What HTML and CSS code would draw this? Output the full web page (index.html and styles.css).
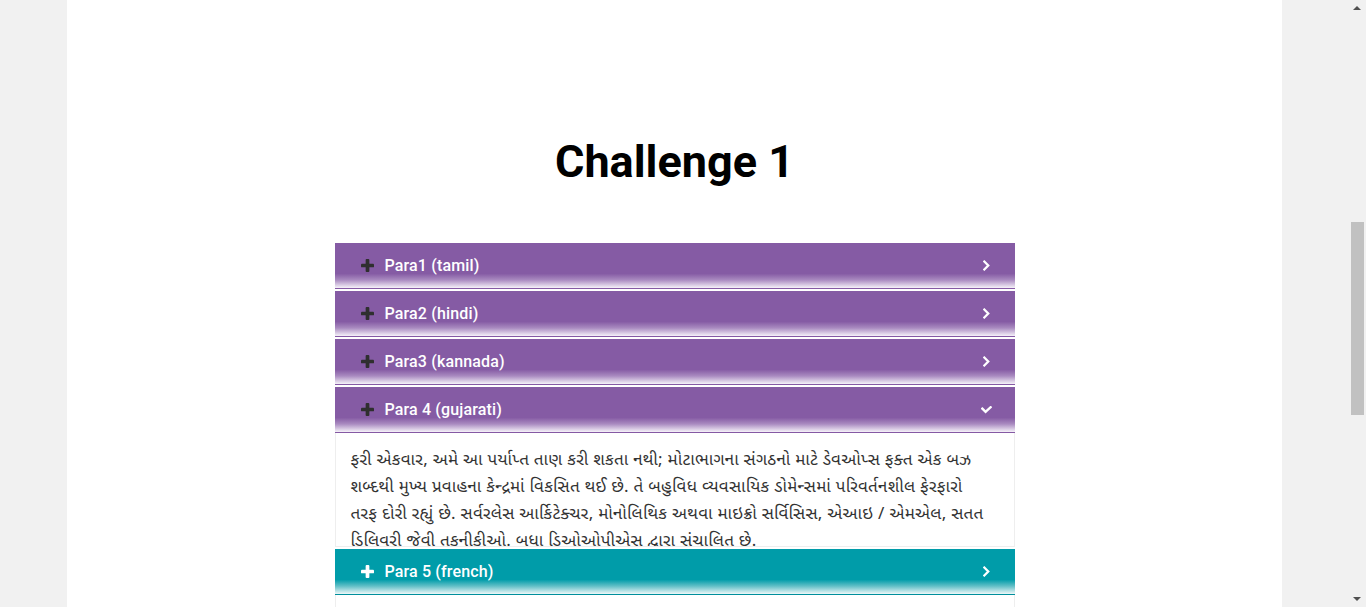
FILE: index.html
```html
<!DOCTYPE html>
<html lang="en">
<head>
<meta charset="utf-8">
<title>Challenge 1</title>
<link rel="stylesheet" href="styles.css">
</head>
<body>
<div class="page">
  <h1 class="title">Challenge 1</h1>
  <div class="accordion">
    <div class="item">
      <div class="head">
        <svg class="plus" viewBox="0 0 14 14"><rect x="5" y="0" width="4" height="14" rx="1"/><rect x="0" y="5" width="14" height="4" rx="1"/></svg>
        <span class="label">Para1 (tamil)</span>
        <svg class="chev" viewBox="0 0 8 12"><path d="M1.5 1.5 L6 6 L1.5 10.5" /></svg>
      </div>
    </div>
    <div class="item">
      <div class="head">
        <svg class="plus" viewBox="0 0 14 14"><rect x="5" y="0" width="4" height="14" rx="1"/><rect x="0" y="5" width="14" height="4" rx="1"/></svg>
        <span class="label">Para2 (hindi)</span>
        <svg class="chev" viewBox="0 0 8 12"><path d="M1.5 1.5 L6 6 L1.5 10.5" /></svg>
      </div>
    </div>
    <div class="item">
      <div class="head">
        <svg class="plus" viewBox="0 0 14 14"><rect x="5" y="0" width="4" height="14" rx="1"/><rect x="0" y="5" width="14" height="4" rx="1"/></svg>
        <span class="label">Para3 (kannada)</span>
        <svg class="chev" viewBox="0 0 8 12"><path d="M1.5 1.5 L6 6 L1.5 10.5" /></svg>
      </div>
    </div>
    <div class="item open">
      <div class="head">
        <svg class="plus" viewBox="0 0 14 14"><rect x="5" y="0" width="4" height="14" rx="1"/><rect x="0" y="5" width="14" height="4" rx="1"/></svg>
        <span class="label">Para 4 (gujarati)</span>
        <svg class="chev-down" viewBox="0 0 12 8"><path d="M1.5 2.5 L5 6 L10.5 1" /></svg>
      </div>
      <div class="body">
        <p class="gu">ફરી એકવાર, અમે આ પર્યાપ્ત તાણ કરી શકતા નથી; મોટાભાગના સંગઠનો માટે ડેવઓપ્સ ફક્ત એક બઝ શબ્દથી મુખ્ય પ્રવાહના કેન્દ્રમાં વિકસિત થઈ છે. તે બહુવિધ વ્યવસાયિક ડોમેન્સમાં પરિવર્તનશીલ ફેરફારો તરફ દોરી રહ્યું છે. સર્વરલેસ આર્કિટેક્ચર, મોનોલિથિક અથવા માઇક્રો સર્વિસિસ, એઆઇ / એમએલ, સતત ડિલિવરી જેવી તકનીકીઓ. બધા ડિઓઓપીએસ દ્વારા સંચાલિત છે.</p>
      </div>
    </div>
    <div class="item active">
      <div class="head">
        <svg class="plus" viewBox="0 0 14 14"><rect x="5" y="0" width="4" height="14" rx="1"/><rect x="0" y="5" width="14" height="4" rx="1"/></svg>
        <span class="label">Para 5 (french)</span>
        <svg class="chev" viewBox="0 0 8 12"><path d="M1.5 1.5 L6 6 L1.5 10.5" /></svg>
      </div>
      <div class="body">
        <p>Encore une fois, nous ne saurions trop insister sur ce point ; pour la plupart des organisations, DevOps est passé d'un simple mot à la mode au cœur du courant dominant. Il entraîne des changements transformateurs dans plusieurs domaines d'activité.</p>
      </div>
    </div>
  </div>
</div>
<div class="scrollbar" aria-hidden="true">
  <span class="arrow up"></span>
  <span class="thumb"></span>
  <span class="arrow down"></span>
</div>
</body>
</html>
```

FILE: styles.css
```css
html, body {
  margin: 0;
  padding: 0;
}
body {
  background: #f1f1f1;
  font-family: Roboto, "Liberation Sans", sans-serif;
  padding-right: 17px;
}
.page {
  width: 1215px;
  margin: 0 auto;
  background: #fff;
  padding: 133px 0 1200px;
  box-sizing: border-box;
}
.title {
  margin: 0 0 53px;
  text-align: center;
  font-size: 45px;
  font-weight: 700;
  color: #000;
  line-height: 57px;
}
.accordion {
  width: 680px;
  margin: 0 auto;
}
.item {
  margin-bottom: 2px;
}
.head {
  height: 45px;
  display: flex;
  align-items: center;
  padding: 0 25px 0 26px;
  border-bottom: 1px solid #8559a4;
  background: linear-gradient(to bottom, #855ba4 0, #855ba4 68%, #a98ac0 82%, #f6f2f9 100%);
  color: #fff;
  box-sizing: content-box;
}
.item.active .head {
  background: linear-gradient(to bottom, #009ca9 0, #009ca9 68%, #5fbec6 82%, #eef8f9 100%);
  border-bottom-color: #008f9c;
}
.plus {
  width: 13px;
  height: 13px;
  fill: #2f2f2f;
  margin-right: 11px;
  flex: none;
}
.item.active .plus {
  fill: #fff;
}
.label {
  font-size: 16px;
  font-weight: 500;
  flex: 1;
  letter-spacing: 0.15px;
}
.chev {
  width: 7px;
  height: 11px;
  fill: none;
  stroke: #fff;
  stroke-width: 2.6;
  stroke-linecap: square;
}
.chev-down {
  width: 11px;
  height: 8px;
  fill: none;
  stroke: #fff;
  stroke-width: 2.6;
  stroke-linecap: square;
  margin-right: -2px;
}
.body {
  border: 1px solid #eeeeee;
  border-top: none;
  height: 114px;
  overflow: hidden;
  padding: 15px 22px 0 15px;
  box-sizing: border-box;
}
.body p {
  margin: 0;
  font-family: "Noto Sans", "Liberation Sans", sans-serif;
  font-size: 17px;
  line-height: 27px;
  color: #333;
}
.body p.gu {
  font-family: "Lohit Gujarati", "Noto Sans Gujarati", "Noto Sans", sans-serif;
  letter-spacing: 0.27px;
}
.scrollbar {
  position: fixed;
  top: 0;
  right: 0;
  width: 17px;
  height: 100%;
  background: #f1f1f1;
}
.thumb {
  position: absolute;
  left: 2px;
  right: 2px;
  top: 222px;
  height: 193px;
  background: #c1c1c1;
}
.arrow {
  position: absolute;
  left: 4px;
  width: 0;
  height: 0;
  border-left: 4px solid transparent;
  border-right: 4px solid transparent;
}
.arrow.up {
  top: 6px;
  border-bottom: 4px solid #505050;
}
.arrow.down {
  bottom: 6px;
  border-top: 4px solid #505050;
}
```
